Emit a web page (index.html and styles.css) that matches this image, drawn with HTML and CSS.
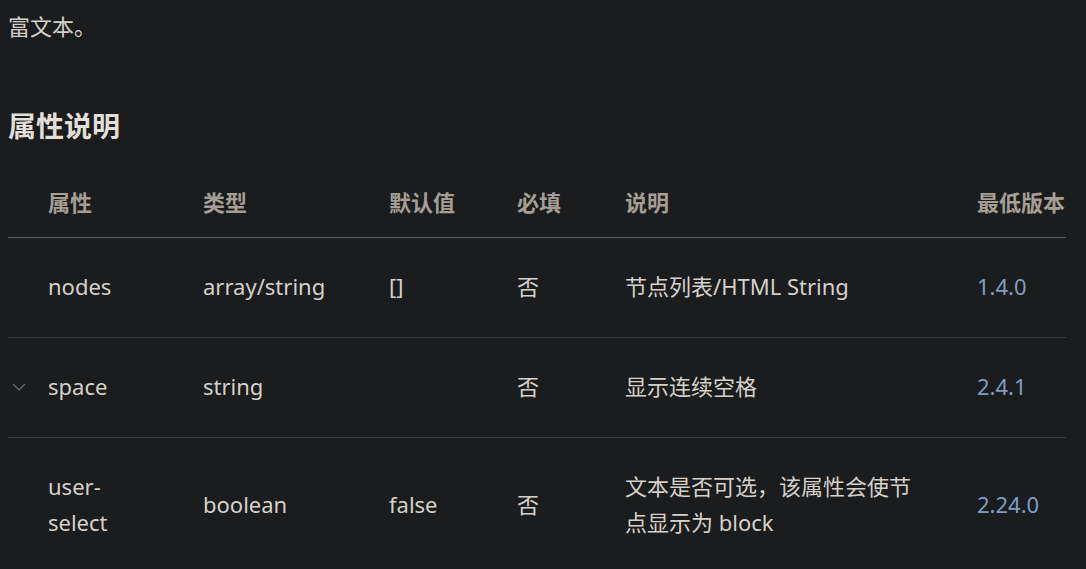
FILE: index.html
```html
<!DOCTYPE html>
<html lang="zh-CN">
<head>
<meta charset="utf-8">
<title>属性说明</title>
<link rel="stylesheet" href="styles.css">
</head>
<body>
<p class="intro">富文本。</p>
<h2 class="title">属性说明</h2>
<table class="props">
  <colgroup>
    <col class="c-exp"><col class="c-name"><col class="c-type"><col class="c-def"><col class="c-req"><col class="c-desc"><col class="c-ver">
  </colgroup>
  <thead>
    <tr>
      <th></th>
      <th>属性</th>
      <th>类型</th>
      <th>默认值</th>
      <th>必填</th>
      <th>说明</th>
      <th class="ver">最低版本</th>
    </tr>
  </thead>
  <tbody>
    <tr>
      <td></td>
      <td class="name">nodes</td>
      <td>array/string</td>
      <td>[]</td>
      <td>否</td>
      <td class="desc">节点列表/HTML String</td>
      <td class="ver">1.4.0</td>
    </tr>
    <tr>
      <td class="exp"><svg class="chev" width="14" height="8" viewBox="0 0 14 8"><path d="M1 1 L7 7 L13 1" fill="none" stroke="currentColor" stroke-width="1.2"/></svg></td>
      <td class="name">space</td>
      <td>string</td>
      <td></td>
      <td>否</td>
      <td class="desc">显示连续空格</td>
      <td class="ver">2.4.1</td>
    </tr>
    <tr>
      <td></td>
      <td class="name">user-select</td>
      <td>boolean</td>
      <td>false</td>
      <td>否</td>
      <td class="desc">文本是否可选，该属性会使节点显示为 block</td>
      <td class="ver">2.24.0</td>
    </tr>
  </tbody>
</table>
</body>
</html>
```
FILE: styles.css
```css
html, body {
  background: #1b1c1e;
}
body {
  margin: 0;
  padding: 0 8px;
  color: #d5d1ca;
  font-family: "Noto Sans", "Noto Sans CJK SC", sans-serif;
  font-size: 22px;
  line-height: 36px;
}
.intro {
  margin: 8px 0 0;
}
.title {
  margin: 61px 0 0;
  font-size: 28px;
  line-height: 42px;
  font-weight: 700;
  color: #e2ded8;
}
.props {
  margin-top: 22px;
  border-collapse: collapse;
  table-layout: fixed;
  width: 1058px;
}
.c-exp { width: 24px; }
.c-name { width: 155px; }
.c-type { width: 186px; }
.c-def { width: 128px; }
.c-req { width: 108px; }
.c-desc { width: 352px; }
.c-ver { width: 105px; }
.props th {
  text-align: left;
  font-weight: 700;
  color: #a49e95;
  padding: 15px 0 17px 16px;
  border-bottom: 1px solid #5e5e5e;
  white-space: nowrap;
}
.props td {
  padding: 30px 0 33px 16px;
  border-bottom: 1px solid #3b3e41;
  vertical-align: middle;
}
.props tbody tr:last-child td {
  border-bottom: none;
}
.props td.name {
  padding-right: 40px;
}
.props td.desc {
  padding-right: 40px;
}
.props td.ver {
  color: #7f9dc2;
}
.props td.exp {
  padding: 0 0 2px 4px;
  color: #6c7074;
}
.chev {
  display: block;
}
```
